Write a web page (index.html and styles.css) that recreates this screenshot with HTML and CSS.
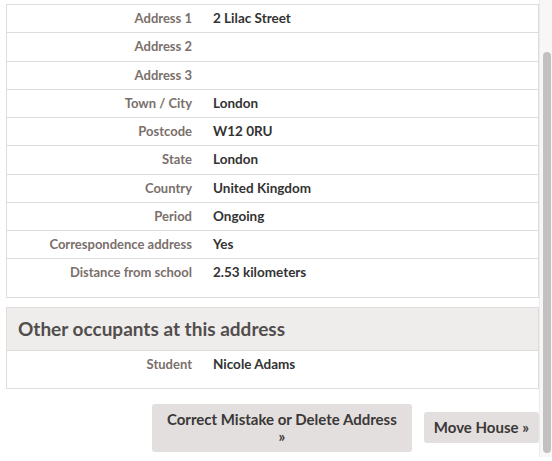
FILE: index.html
```html
<!DOCTYPE html>
<html lang="en">
<head>
<meta charset="utf-8">
<title>Address</title>
<link rel="stylesheet" href="styles.css">
</head>
<body>
<div class="page">
  <section class="panel details">
    <table class="info">
      <tr><th>Address 1</th><td>2 Lilac Street</td></tr>
      <tr><th>Address 2</th><td></td></tr>
      <tr><th>Address 3</th><td></td></tr>
      <tr><th>Town / City</th><td>London</td></tr>
      <tr><th>Postcode</th><td>W12 0RU</td></tr>
      <tr><th>State</th><td>London</td></tr>
      <tr><th>Country</th><td>United Kingdom</td></tr>
      <tr><th>Period</th><td>Ongoing</td></tr>
      <tr><th>Correspondence address</th><td>Yes</td></tr>
      <tr><th>Distance from school</th><td>2.53 kilometers</td></tr>
    </table>
  </section>
  <section class="panel occupants">
    <h2 class="panel-title">Other occupants at this address</h2>
    <table class="info">
      <tr><th>Student</th><td>Nicole Adams</td></tr>
    </table>
  </section>
  <div class="actions">
    <button class="btn btn-wide">Correct Mistake or Delete Address<br>»</button>
    <button class="btn">Move House »</button>
  </div>
</div>
<div class="scrollbar"><div class="thumb"></div></div>
</body>
</html>
```
FILE: styles.css
```css
html, body {
  margin: 0;
  padding: 0;
  background: #ffffff;
}
body {
  font-family: Lato, "Open Sans", sans-serif;
  color: #333;
  overflow: hidden;
  height: 461px;
}
.page {
  padding: 4px 13px 0 6px;
}
.panel {
  border: 1px solid #e0dcdb;
  padding-bottom: 10px;
}
.occupants {
  margin-top: 9px;
}
.panel-title {
  margin: 0;
  padding: 10px 11px;
  font-size: 19px;
  line-height: 22px;
  font-weight: 700;
  color: #524e4c;
  background: #efedec;
  border-bottom: 1px solid #e0dcdb;
}
.info {
  width: 100%;
  border-collapse: collapse;
  table-layout: fixed;
  font-size: 13px;
}
.info tr {
  border-bottom: 1px solid #e0dcdb;
}
.info tr:last-child {
  border-bottom: none;
}
.info th {
  width: 185px;
  padding: 4px 0;
  line-height: 19.25px;
  text-align: right;
  font-weight: 700;
  color: #7a6f6b;
  vertical-align: top;
  white-space: nowrap;
}
.info td {
  padding: 4px 0 4px 21px;
  line-height: 19.25px;
  font-size: 13.5px;
  font-weight: 700;
  color: #333;
  vertical-align: top;
}
.actions {
  display: flex;
  justify-content: flex-end;
  align-items: center;
  gap: 12px;
  margin-top: 15px;
}
.btn {
  font-family: inherit;
  font-size: 15px;
  line-height: 17px;
  font-weight: 700;
  color: #3b3837;
  background: #e2dfde;
  border: none;
  border-radius: 3px;
  padding: 7px 10px;
  text-align: center;
}
.btn-wide {
  width: 260px;
}
.scrollbar {
  position: absolute;
  top: 0;
  right: 0;
  width: 13px;
  height: 457px;
  background: #f7f7f7;
  border-left: 1px solid #ececec;
  box-sizing: border-box;
}
.thumb {
  position: absolute;
  top: 52px;
  left: 3px;
  width: 8px;
  height: 401px;
  border-radius: 4px;
  background: #c1c1c1;
}
```
